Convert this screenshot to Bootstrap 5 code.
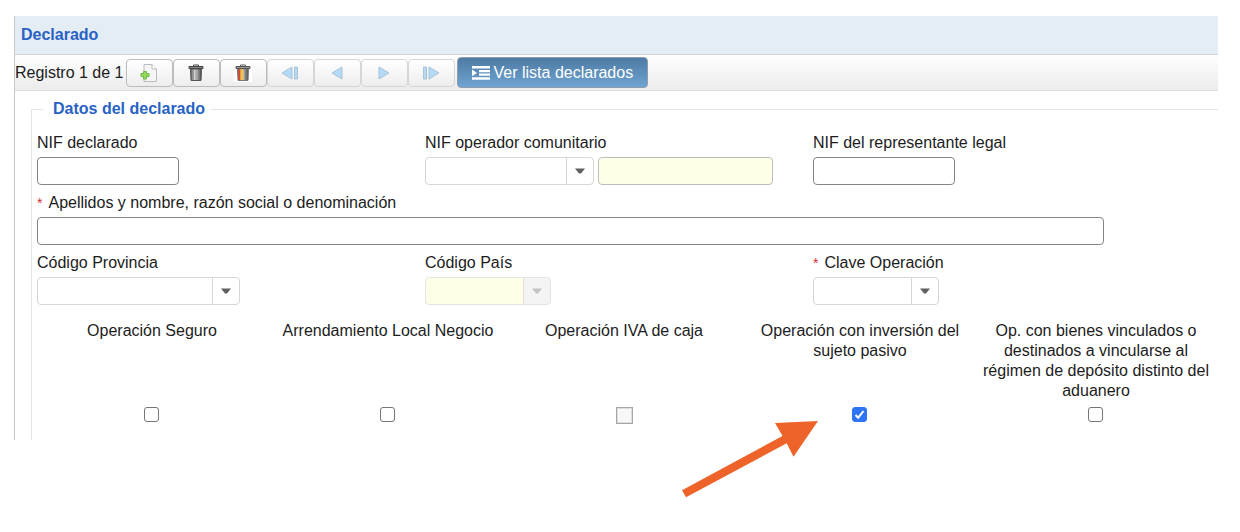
<!DOCTYPE html>
<html lang="es">
<head>
<meta charset="utf-8">
<meta name="viewport" content="width=device-width, initial-scale=1">
<title>Declarado</title>
<link href="https://cdn.jsdelivr.net/npm/bootstrap@5.3.0/dist/css/bootstrap.min.css" rel="stylesheet">
<style>
  body { font-family: "Liberation Sans", Arial, sans-serif; font-size: 16px; line-height: 20px; color: #1c1c1c; background: #fff; }
  .panel { margin: 16px 22px 0 14px; border-left: 1px solid #c8c8c8; }
  .panel-title { height: 39px; padding-left: 6px; font-size: 16px; font-weight: 700; color: #2862c4; background: #e4ecf4; border-bottom: 1px solid #d0d4d8; }
  .toolbar { min-height: 36px; background: linear-gradient(#fff, #ebebeb); border-bottom: 1px solid #e0e0e0; }
  .tools { margin-left: 2px; }
  .tool { width: 47px; height: 28px; border: 1px solid #bcbcbc; border-radius: 4px; background: linear-gradient(#fff, #ededed); }
  .tool:disabled { border-color: #d6d6d6; }
  .tool svg { display: block; }
  .btn-list { height: 31px; margin-left: 2px; padding: 0 14px; gap: 4px; font-size: 16px; line-height: 20px; color: #fff; border: 1px solid #8f9daa; border-radius: 4px; background: linear-gradient(#4d7ba3, #6fa3d2); }
  .group { margin: 8px 0 0 16px; border-left: 1px solid #e4e4e4; padding-bottom: 17px; }
  .group legend { float: none; display: flex; align-items: center; width: 100%; height: 20px; margin: 0 0 14px; font-size: 16px; line-height: 20px; font-weight: 700; color: #2862c4; gap: 6px; }
  .group legend::before, .group legend::after { content: ""; height: 1px; background: #e4e4e4; }
  .group legend::before { width: 11px; margin-right: 4px; }
  .group legend::after { flex: 1; }
  .group-line { border-top: 1px solid #e4e4e4; }
  .fields { padding: 0 17px 0 5px; }
  .fields label { display: block; margin-bottom: 4px; }
  .field { margin-bottom: 8px; }
  .req { color: #d23030; font-size: 14px; margin-right: 6px; }
  .box { height: 28px; padding: 2px 6px; font-size: 16px; line-height: 20px; border: 1px solid #858585; border-radius: 4px; }
  .box:disabled, .box[readonly] { background-color: #ffffe8; border-color: #bdbdbd; }
  .pick { height: 28px; padding: 2px 32px 2px 6px; font-size: 16px; line-height: 20px; border: 1px solid #d6d6d6; border-radius: 4px;
    background-image: url("data:image/svg+xml,%3Csvg xmlns='http://www.w3.org/2000/svg' viewBox='0 0 27 26'%3E%3Cpath d='M0 0h1v26H0z' fill='%23d6d6d6'/%3E%3Cpath d='M9 10.500h10l-4 5h-2z' fill='%23606060'/%3E%3C/svg%3E");
    background-size: 27px 26px; background-position: right 0 center; }
  .pick:disabled { background-color: #ffffe8; border-color: #e4e4e4;
    background-image: url("data:image/svg+xml,%3Csvg xmlns='http://www.w3.org/2000/svg' viewBox='0 0 27 26'%3E%3Cpath d='M0 0h27v26H0z' fill='%23f4f4f4'/%3E%3Cpath d='M0 0h1v26H0z' fill='%23e0e0e0'/%3E%3Cpath d='M9 10.500h10l-4 5h-2z' fill='%23c4c4c4'/%3E%3C/svg%3E"); }
  .w-nif { width: 142px; } .w-op { width: 169px; } .w-name { width: 175px; } .w-prov { width: 203px; } .w-short { width: 126px; }
  .checks { margin: 8px 4px 0 2px; }
  .checks label { padding: 0 2px; margin-bottom: 6px; flex: 1; }
  .tick { position: relative; width: 16px; height: 16px; }
  .tick .form-check-input { display: block; width: 15px; height: 15px; margin: 0; border: 1px solid #767676; border-radius: 3px; opacity: 1; }
  .tick .form-check-input:checked { border-color: #2f74f5; background: #2f74f5 url("data:image/svg+xml,%3Csvg xmlns='http://www.w3.org/2000/svg' viewBox='0 0 13 13'%3E%3Cpath d='M2.500 7l2.700 2.700L10.500 3' fill='none' stroke='%23fff' stroke-width='2'/%3E%3C/svg%3E") center / 13px 13px no-repeat; }
  .tick .form-check-input:disabled { width: 17px; height: 17px; border: 1px solid #a6a6a6; border-radius: 0; background: #f8f8f8; box-shadow: inset 0 0 0 1px #dedede; }
</style>
</head>
<body class="min-vh-100 d-flow-root">
<main class="panel">
  <h1 class="panel-title d-flex align-items-center m-0">Declarado</h1>
  <div class="toolbar d-flex align-items-center flex-wrap">
    <span>Registro 1 de 1</span>
    <div class="tools d-flex" role="toolbar" aria-label="Registros">
      <button type="button" class="tool btn p-0 d-flex align-items-center justify-content-center" aria-label="Nuevo registro">
        <svg width="18" height="18" viewBox="0 0 18 18"><path d="M4 .5h8l4.500 4.500v12.500H4z" fill="#f5f5f5" stroke="#b9bdbb"/><path d="M12 .5v4.500h4.500" fill="#fff" stroke="#b9bdbb"/><path d="M3.500 7.500h3v2h2.500v3H6.500v2.500h-3v-2.500H1v-3h2.500z" fill="#93d95b" stroke="#6cb548"/></svg>
      </button>
      <button type="button" class="tool btn p-0 d-flex align-items-center justify-content-center" aria-label="Borrar registro">
        <svg width="18" height="18" viewBox="0 0 18 18"><defs><linearGradient id="metal"><stop stop-color="#555"/><stop offset=".4" stop-color="#ddd"/><stop offset="1" stop-color="#444"/></linearGradient></defs><path d="M3.500 5h11l-.5 11.500H4z" fill="url(#metal)" stroke="#555"/><path d="M6.500 6v10M9 6v10M11.500 6v10" stroke="#888" stroke-width=".6"/><path d="M2 2.500h14v2H2z" fill="#888" stroke="#444"/><path d="M6.500 2V1h5v1" fill="none" stroke="#444"/></svg>
      </button>
      <button type="button" class="tool btn p-0 d-flex align-items-center justify-content-center" aria-label="Borrar todos los registros">
        <svg width="18" height="18" viewBox="0 0 18 18"><path fill="#fff" d="M0 0h18v18H0z"/><path d="M3.500 5h11l-.5 11.500H4z" fill="url(#metal)" stroke="#777"/><path d="M4.500 5h2v11h-2z" fill="#e0452c"/><path d="M6.500 5H9v11H6.500z" fill="#f8c233"/><path d="M11.500 6v10" stroke="#777" stroke-width=".7"/><path d="M2 2.500h14v2H2z" fill="#999" stroke="#555"/><path d="M6.500 2V1h5v1" fill="none" stroke="#555"/></svg>
      </button>
      <button type="button" disabled class="tool btn p-0 d-flex align-items-center justify-content-center opacity-100" aria-label="Primero">
        <svg width="18" height="14" viewBox="0 0 18 14" fill="#b4daf8" stroke="#a9c3d6"><path d="M1 7l10-6v12zM13.500 1h3v12h-3z"/></svg>
      </button>
      <button type="button" disabled class="tool btn p-0 d-flex align-items-center justify-content-center opacity-100" aria-label="Anterior">
        <svg width="12" height="14" viewBox="0 0 12 14" fill="#b4daf8" stroke="#a9c3d6"><path d="M1 7l10-6v12z"/></svg>
      </button>
      <button type="button" disabled class="tool btn p-0 d-flex align-items-center justify-content-center opacity-100" aria-label="Siguiente">
        <svg width="12" height="14" viewBox="0 0 12 14" fill="#b4daf8" stroke="#a9c3d6"><path d="M11 7L1 1v12z"/></svg>
      </button>
      <button type="button" disabled class="tool btn p-0 d-flex align-items-center justify-content-center opacity-100" aria-label="Último">
        <svg width="18" height="14" viewBox="0 0 18 14" fill="#b4daf8" stroke="#a9c3d6"><path d="M17 7L7 1v12zM1.500 1h3v12h-3z"/></svg>
      </button>
    </div>
    <button type="button" class="btn-list btn d-inline-flex align-items-center">
      <svg width="18" height="14" viewBox="0 0 18 14" fill="#fff"><path d="M0 0h18v2.500H0zM7 4h11v2.300H7zM7 7.500h11v2.300H7zM0 11.200h18v2.500H0zM0 3.500l5 3.400-5 3.400z"/></svg>
      Ver lista declarados
    </button>
  </div>

  <fieldset class="group">
    <legend>Datos del declarado</legend>
    <div>
      <div class="fields">
        <div class="row g-0">
          <div class="field col-4"><label for="nif">NIF declarado</label><input id="nif" type="text" class="form-control box w-nif"></div>
          <div class="field col-4"><label for="nifop">NIF operador comunitario</label>
            <div class="d-flex">
              <select id="nifop" class="form-select pick w-op me-1"><option></option></select>
              <input type="text" class="form-control box w-name" readonly aria-label="Número de operador">
            </div>
          </div>
          <div class="field col-4"><label for="nifrep">NIF del representante legal</label><input id="nifrep" type="text" class="form-control box w-nif"></div>
          <div class="field col-11"><label for="nombre"><span class="req">*</span>Apellidos y nombre, razón social o denominación</label><input id="nombre" type="text" class="form-control box" required></div>
        </div>
        <div class="row g-0">
          <div class="field col-4"><label for="prov">Código Provincia</label><select id="prov" class="form-select pick w-prov"><option></option></select></div>
          <div class="field col-4"><label for="pais">Código País</label><select id="pais" class="form-select pick w-short" disabled><option></option></select></div>
          <div class="field col-4"><label for="clave"><span class="req">*</span>Clave Operación</label><select id="clave" class="form-select pick w-short" required><option></option></select></div>
        </div>
      </div>
      <div class="checks row row-cols-5 g-0 text-center">
        <div class="col d-flex flex-column align-items-center"><label for="c1">Operación Seguro</label><div class="tick"><input id="c1" type="checkbox" class="form-check-input"></div></div>
        <div class="col d-flex flex-column align-items-center"><label for="c2">Arrendamiento Local Negocio</label><div class="tick"><input id="c2" type="checkbox" class="form-check-input"></div></div>
        <div class="col d-flex flex-column align-items-center"><label for="c3">Operación IVA de caja</label><div class="tick"><input id="c3" type="checkbox" class="form-check-input" disabled></div></div>
        <div class="col d-flex flex-column align-items-center"><label for="c4">Operación con inversión del sujeto pasivo</label>
          <div class="tick"><input id="c4" type="checkbox" class="form-check-input" checked>
            <svg class="position-absolute top-0 end-100" width="170" height="92" viewBox="0 0 170 92" aria-hidden="true"><path d="M136 14L93 16l7.500 13L0 83.300l4 7L104.700 36.300l6.800 13.400z" fill="#ed6329"/></svg>
          </div>
        </div>
        <div class="col d-flex flex-column align-items-center"><label for="c5">Op. con bienes vinculados o destinados a vincularse al régimen de depósito distinto del aduanero</label><div class="tick"><input id="c5" type="checkbox" class="form-check-input"></div></div>
      </div>
    </div>
  </fieldset>
</main>
<script src="https://cdn.jsdelivr.net/npm/bootstrap@5.3.0/dist/js/bootstrap.bundle.min.js"></script>
</body>
</html>
